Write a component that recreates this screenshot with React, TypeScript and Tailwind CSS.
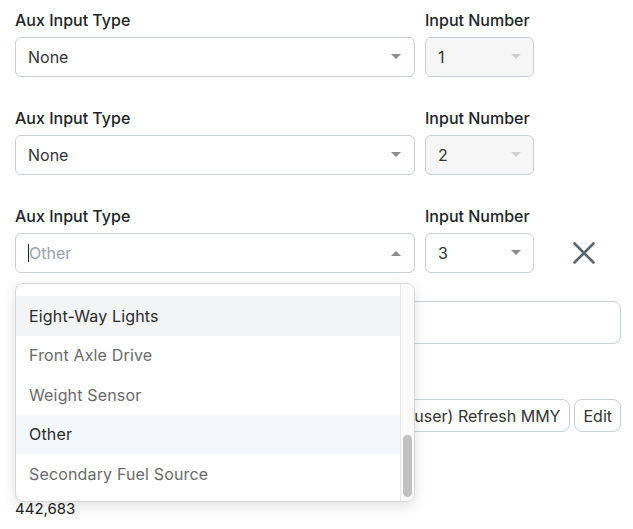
import React from "react";

function Caret({ up = false, light = false }: { up?: boolean; light?: boolean }) {
  return (
    <svg width="10" height="6" viewBox="0 0 10 6" className={up ? "rotate-180" : ""}>
      <path d="M0 0 L10 0 L5 5 Z" fill={light ? "#cfcfcf" : "#8c8c8c"} />
    </svg>
  );
}

function TypeSelect({ value, open = false }: { value: string; open?: boolean }) {
  return (
    <div className="flex h-10 w-[400px] items-center justify-between rounded-md border border-[#c8cfd7] bg-white pl-3 pr-[13px]">
      {open ? (
        <div className="flex items-center">
          <span className="h-[18px] w-px bg-[#222]" />
          <span className="text-[16px] text-[#98a2ad]">{value}</span>
        </div>
      ) : (
        <span className="text-[16px] text-[#333]">{value}</span>
      )}
      <Caret up={open} />
    </div>
  );
}

function NumberSelect({ value, disabled = false }: { value: string; disabled?: boolean }) {
  return (
    <div
      className={
        "flex h-10 w-[109px] items-center justify-between rounded-md border border-[#c8cfd7] pl-3 pr-[12px] " +
        (disabled ? "bg-[#f6f6f6]" : "bg-white")
      }
    >
      <span className="text-[16px] text-[#333]">{value}</span>
      <Caret light={disabled} />
    </div>
  );
}

function AuxRow({ type, num, disabled, open, removable }: { type: string; num: string; disabled?: boolean; open?: boolean; removable?: boolean }) {
  return (
    <div className="flex items-end gap-[10px]">
      <div className="flex flex-col gap-[7px]">
        <label className="text-[16px] font-medium leading-5 text-[#212529]">Aux Input Type</label>
        <TypeSelect value={type} open={open} />
      </div>
      <div className="flex flex-col gap-[7px]">
        <label className="text-[16px] font-medium leading-5 text-[#212529]">Input Number</label>
        <NumberSelect value={num} disabled={disabled} />
      </div>
      {removable && (
        <button className="ml-[29px] flex h-10 items-center">
          <svg width="22" height="22" viewBox="0 0 22 22">
            <path d="M1.5 1.5 L20.5 20.5 M20.5 1.5 L1.5 20.5" stroke="#5b6570" strokeWidth="2.6" strokeLinecap="round" />
          </svg>
        </button>
      )}
    </div>
  );
}

const options = [
  { label: "Eight-Way Lights", active: true },
  { label: "Front Axle Drive" },
  { label: "Weight Sensor" },
  { label: "Other", selected: true },
  { label: "Secondary Fuel Source" },
];

export default function App() {
  return (
    <div className="relative min-h-[529px] bg-white pl-[15px] pr-3 pt-[10px] font-['Inter',sans-serif]">
      <div className="flex flex-col gap-[31px]">
        <AuxRow type="None" num="1" disabled />
        <AuxRow type="None" num="2" disabled />
        <AuxRow type="Other" num="3" open removable />
      </div>

      <div className="mt-[28px] h-[43px] w-full rounded-lg border border-[#c8cfd7] bg-white" />

      <div className="mt-[55px] flex justify-end gap-1">
        <button className="h-[33px] rounded-lg border border-[#c8cfd7] px-[9px] text-[16px] text-[#333]">(Superuser) Refresh MMY</button>
        <button className="h-[33px] rounded-lg border border-[#c8cfd7] px-[8px] text-[16px] text-[#333]">Edit</button>
      </div>

      <div className="mt-[67px] text-[15px] leading-5 text-[#222]">442,683</div>

      <div className="absolute left-[15px] top-[283px] flex h-[219px] w-[400px] overflow-hidden rounded-lg border border-[#d4d8dd] bg-white shadow-[0_4px_14px_rgba(0,0,0,0.12)]">
        <div className="flex flex-1 flex-col">
          <div className="h-[12px]" />
          {options.map((o) => (
            <div
              key={o.label}
              className={
                "flex h-[39.5px] items-center px-[13px] text-[16px] tracking-[0.01em] " +
                (o.active ? "bg-[#f3f4f6] text-[#2b2b2b]" : o.selected ? "bg-[#f3f8fc] text-[#2b2b2b]" : "text-[#6a6a6a]")
              }
            >
              {o.label}
            </div>
          ))}
        </div>
        <div className="flex w-[14px] flex-col border-l border-[#e6e6e6] bg-[#fafafa] px-[2px] pb-[4px] pt-[151px]">
          <div className="h-[62px] w-full rounded-full bg-[#c1c1c1]" />
        </div>
      </div>
    </div>
  );
}
